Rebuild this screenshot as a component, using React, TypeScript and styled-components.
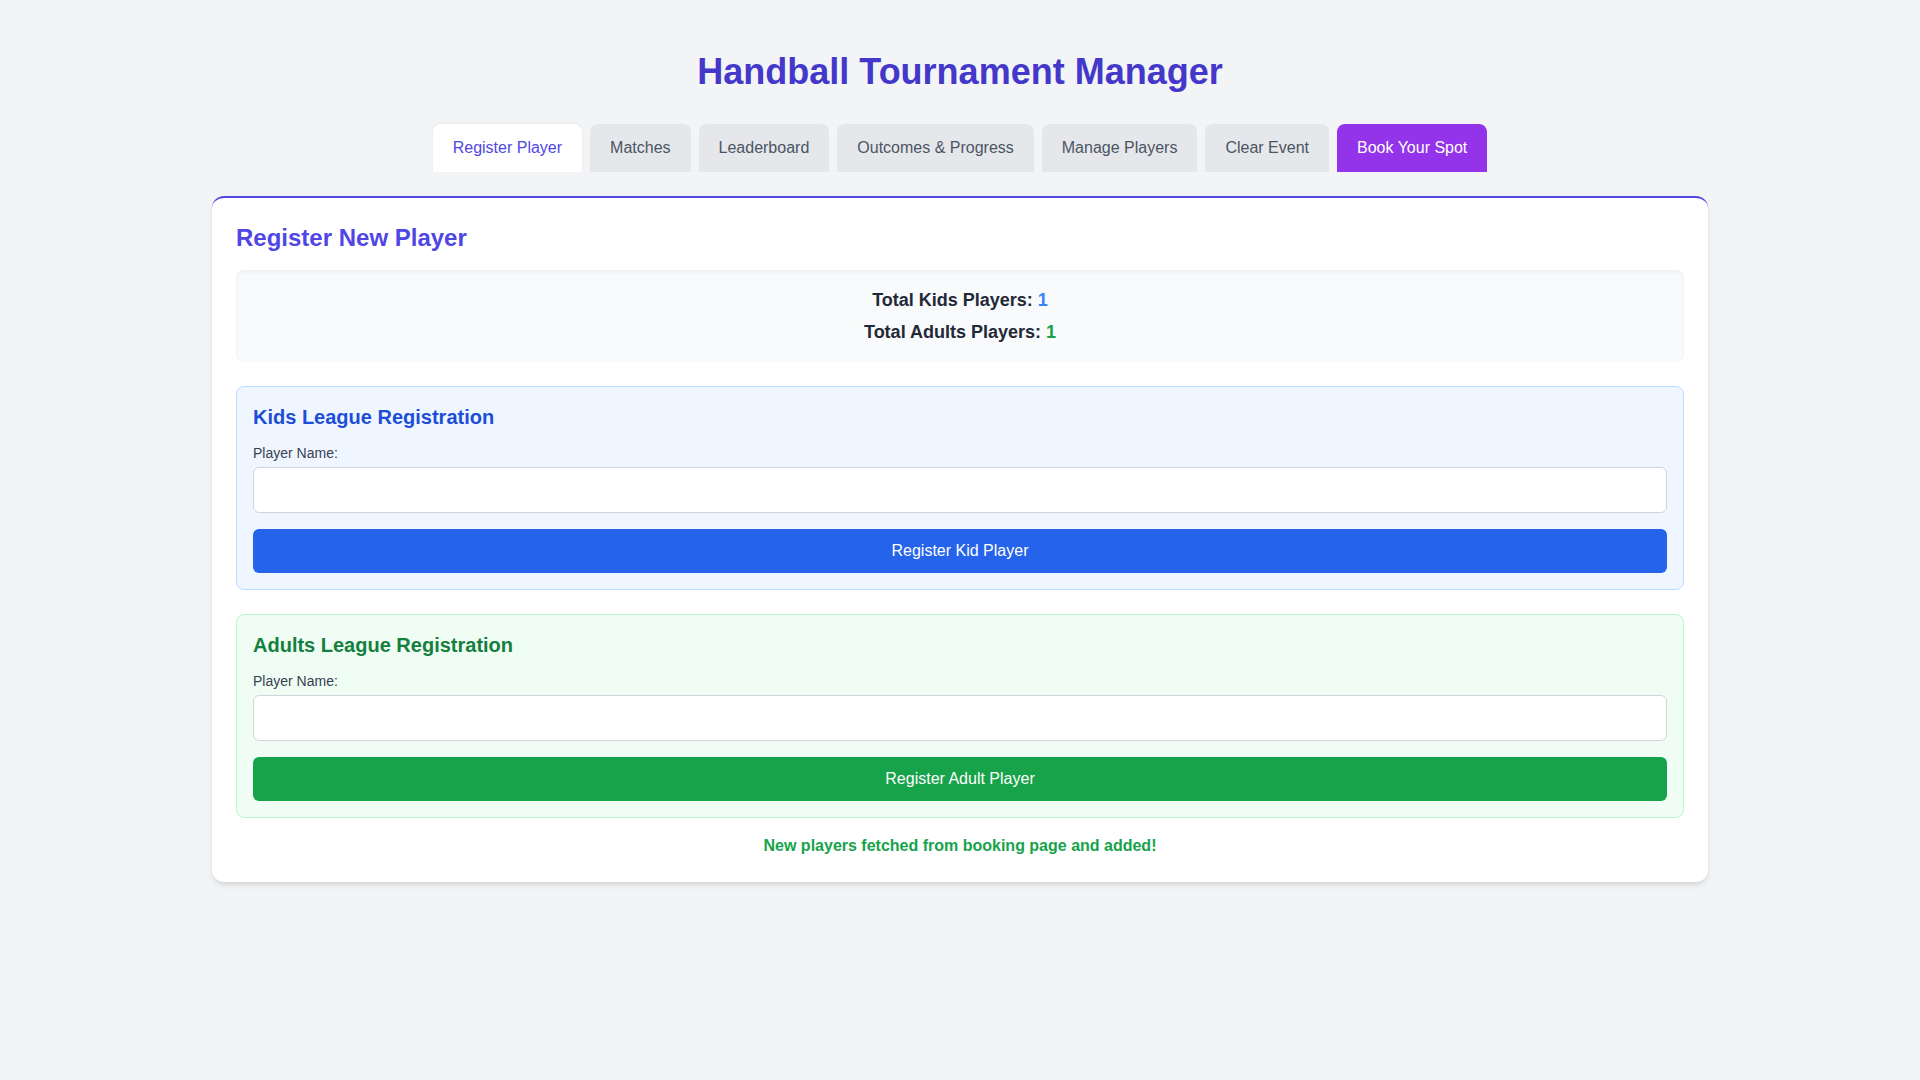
import React from "react";
import styled, { createGlobalStyle } from "styled-components";

const GlobalStyle = createGlobalStyle`
  * { box-sizing: border-box; }
  html, body { margin: 0; padding: 0; }
  body {
    background: #f3f4f6;
    font-family: "Liberation Sans", Arial, sans-serif;
    color: #1f2937;
  }
`;

const Page = styled.div`
  min-height: 1080px;
  padding: 52px 0 40px;
`;

const Title = styled.h1`
  margin: 0 0 32px;
  text-align: center;
  font-size: 36px;
  line-height: 40px;
  font-weight: 700;
  color: #4338ca;
`;

const TabBar = styled.nav`
  display: flex;
  justify-content: center;
  gap: 8px;
  margin-bottom: 24px;
`;

type TabKind = "active" | "idle" | "cta";

const Tab = styled.button<{ $kind: TabKind }>`
  font-family: inherit;
  font-size: 16px;
  line-height: 24px;
  padding: 12px 20px;
  border: none;
  border-radius: 8px 8px 0 0;
  cursor: pointer;
  background: ${(p) =>
    p.$kind === "active" ? "#ffffff" : p.$kind === "cta" ? "#9333ea" : "#e5e7eb"};
  color: ${(p) =>
    p.$kind === "active" ? "#4f46e5" : p.$kind === "cta" ? "#ffffff" : "#4b5563"};
  box-shadow: ${(p) =>
    p.$kind === "active" ? "0 -1px 3px rgba(0,0,0,0.06)" : "none"};
`;

const Card = styled.main`
  width: 1496px;
  margin: 0 auto;
  background: #ffffff;
  border-top: 2px solid #4f46e5;
  border-radius: 12px;
  padding: 24px;
  box-shadow: 0 4px 6px -1px rgba(0, 0, 0, 0.1), 0 2px 4px -2px rgba(0, 0, 0, 0.1);
`;

const CardTitle = styled.h2`
  margin: 0 0 16px;
  font-size: 24px;
  line-height: 32px;
  font-weight: 700;
  color: #4f46e5;
`;

const Stats = styled.div`
  background: #f9fafb;
  border-radius: 8px;
  padding: 16px;
  margin-bottom: 24px;
  box-shadow: inset 0 2px 4px 0 rgba(0, 0, 0, 0.05);
  display: flex;
  flex-direction: column;
  align-items: center;
  gap: 4px;
`;

const StatLine = styled.p`
  margin: 0;
  font-size: 18px;
  line-height: 28px;
  font-weight: 700;
  color: #1f2937;
`;

const StatValue = styled.span<{ $color: string }>`
  color: ${(p) => p.$color};
`;

type Theme = { bg: string; border: string; heading: string; button: string };

const kidsTheme: Theme = {
  bg: "#eff6ff",
  border: "#bfdbfe",
  heading: "#1d4ed8",
  button: "#2563eb",
};

const adultsTheme: Theme = {
  bg: "#f0fdf4",
  border: "#bbf7d0",
  heading: "#15803d",
  button: "#16a34a",
};

const Section = styled.section<{ $t: Theme }>`
  background: ${(p) => p.$t.bg};
  border: 1px solid ${(p) => p.$t.border};
  border-radius: 8px;
  padding: 16px;
  & + & {
    margin-top: 24px;
  }
`;

const SectionTitle = styled.h3<{ $color: string }>`
  margin: 0 0 12px;
  font-size: 20px;
  line-height: 28px;
  font-weight: 700;
  color: ${(p) => p.$color};
`;

const Label = styled.label`
  display: block;
  font-size: 14px;
  line-height: 20px;
  color: #374151;
  margin-bottom: 4px;
`;

const Input = styled.input`
  display: block;
  width: 100%;
  height: 46px;
  padding: 10px 12px;
  font-family: inherit;
  font-size: 16px;
  border: 1px solid #d1d5db;
  border-radius: 6px;
  background: #ffffff;
  outline: none;
`;

const SubmitButton = styled.button<{ $color: string }>`
  display: block;
  width: 100%;
  margin-top: 16px;
  height: 44px;
  border: none;
  border-radius: 6px;
  background: ${(p) => p.$color};
  color: #ffffff;
  font-family: inherit;
  font-size: 16px;
  line-height: 24px;
  cursor: pointer;
`;

const Message = styled.p`
  margin: 16px 0 0;
  text-align: center;
  font-size: 16px;
  line-height: 24px;
  font-weight: 700;
  color: #16a34a;
`;

const tabs: { label: string; kind: TabKind }[] = [
  { label: "Register Player", kind: "active" },
  { label: "Matches", kind: "idle" },
  { label: "Leaderboard", kind: "idle" },
  { label: "Outcomes & Progress", kind: "idle" },
  { label: "Manage Players", kind: "idle" },
  { label: "Clear Event", kind: "idle" },
  { label: "Book Your Spot", kind: "cta" },
];

function RegistrationForm({
  title,
  theme,
  buttonText,
  id,
}: {
  title: string;
  theme: Theme;
  buttonText: string;
  id: string;
}) {
  return (
    <Section $t={theme}>
      <SectionTitle $color={theme.heading}>{title}</SectionTitle>
      <Label htmlFor={id}>Player Name:</Label>
      <Input id={id} type="text" />
      <SubmitButton $color={theme.button}>{buttonText}</SubmitButton>
    </Section>
  );
}

export default function App() {
  return (
    <>
      <GlobalStyle />
      <Page>
        <Title>Handball Tournament Manager</Title>
        <TabBar>
          {tabs.map((t) => (
            <Tab key={t.label} $kind={t.kind}>
              {t.label}
            </Tab>
          ))}
        </TabBar>
        <Card>
          <CardTitle>Register New Player</CardTitle>
          <Stats>
            <StatLine>
              Total Kids Players: <StatValue $color="#3b82f6">1</StatValue>
            </StatLine>
            <StatLine>
              Total Adults Players: <StatValue $color="#16a34a">1</StatValue>
            </StatLine>
          </Stats>
          <RegistrationForm
            id="kid-name"
            title="Kids League Registration"
            theme={kidsTheme}
            buttonText="Register Kid Player"
          />
          <RegistrationForm
            id="adult-name"
            title="Adults League Registration"
            theme={adultsTheme}
            buttonText="Register Adult Player"
          />
          <Message>New players fetched from booking page and added!</Message>
        </Card>
      </Page>
    </>
  );
}
